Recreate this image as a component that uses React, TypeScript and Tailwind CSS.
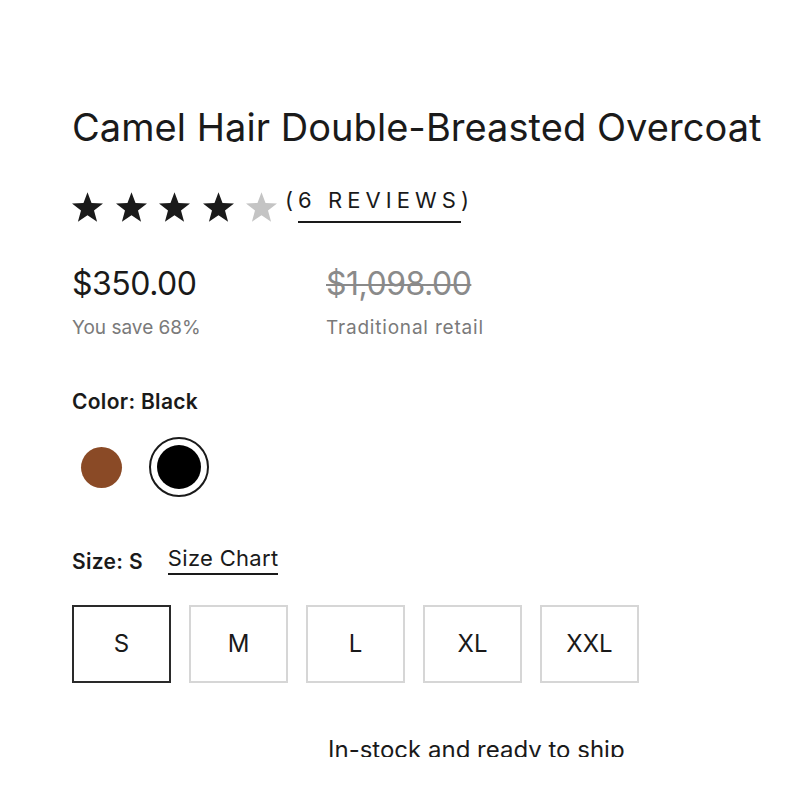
import { useState } from 'react';

const SIZES = ['S', 'M', 'L', 'XL', 'XXL'];

const COLORS = [
  { name: 'Camel', hex: '#8a4a26' },
  { name: 'Black', hex: '#000000' },
];

function Star({ filled }: { filled: boolean }) {
  return (
    <svg viewBox="0 0 24 23" className="w-[31px] h-[30px]" fill={filled ? '#1a1a1a' : '#c4c4c4'}>
      <path d="M12 0L15.12 8.33 24 8.72 17.04 14.26 19.42 22.83 12 17.92 4.58 22.83 6.96 14.26 0 8.72 8.88 8.33Z" />
    </svg>
  );
}

export default function App() {
  const [color, setColor] = useState('Black');
  const [size, setSize] = useState('S');

  return (
    <div className="w-[800px] h-[800px] bg-white overflow-hidden" style={{ fontFamily: 'Inter, "Liberation Sans", sans-serif' }}>
      <div className="h-[757px] overflow-hidden pl-[72px] pt-[104px] text-[#1a1a1a]">
        <h1 className="text-[38px] leading-[46px] tracking-[0.05px] whitespace-nowrap">
          Camel Hair Double-Breasted Overcoat
        </h1>

        {/* Rating */}
        <div className="flex items-center mt-[42px]">
          <div className="flex gap-[12.5px]">
            {[0, 1, 2, 3, 4].map((i) => (
              <Star key={i} filled={i < 4} />
            ))}
          </div>
          <div className="ml-[8px] -mt-[14px] text-[22px] tracking-[0.23em] leading-[28px]">
            (<span className="border-b-2 border-[#1a1a1a] pb-[8px]">6 REVIEWS</span>)
          </div>
        </div>

        {/* Price */}
        <div className="flex mt-[42px]">
          <div className="w-[254px]">
            <div className="text-[32px] leading-[40px] tracking-[-0.5px]">$350.00</div>
            <div className="text-[19px] text-[#7a7a7a] mt-[12px] leading-[24px]">You save 68%</div>
          </div>
          <div>
            <div className="text-[32px] leading-[40px] tracking-[-0.5px] text-[#8a8a8a] line-through decoration-2">$1,098.00</div>
            <div className="text-[19px] text-[#7a7a7a] mt-[12px] leading-[24px] tracking-[0.8px]">Traditional retail</div>
          </div>
        </div>

        {/* Color */}
        <div className="mt-[49px] text-[21px] font-semibold leading-[26px] tracking-[0.3px]">Color: {color}</div>
        <div className="flex items-center gap-[18px] mt-[22px] -ml-[1px]">
          {COLORS.map((c) => {
            const selected = c.name === color;
            return (
              <button
                key={c.name}
                onClick={() => setColor(c.name)}
                className={`w-[60px] h-[60px] rounded-full flex items-center justify-center ${
                  selected ? 'border-2 border-[#1a1a1a]' : 'border-2 border-transparent'
                }`}
              >
                <span
                  className={`block rounded-full ${selected ? 'w-[44px] h-[44px]' : 'w-[41px] h-[41px]'}`}
                  style={{ backgroundColor: c.hex }}
                />
              </button>
            );
          })}
        </div>

        {/* Size */}
        <div className="flex items-end mt-[48px] text-[21px] leading-[26px]">
          <span className="font-semibold tracking-[0.3px]">Size: {size}</span>
          <span className="ml-[25px] text-[22px] tracking-[0.3px] border-b-2 border-[#1a1a1a] pb-[2px]">Size Chart</span>
        </div>
        <div className="flex gap-[18px] mt-[30px]">
          {SIZES.map((s) => (
            <button
              key={s}
              onClick={() => setSize(s)}
              className={`w-[99px] h-[78px] flex items-center justify-center text-[24px] border-2 ${
                s === size ? 'border-[#2a2a2a]' : 'border-[#d6d6d6]'
              }`}
            >
              {s}
            </button>
          ))}
        </div>

        <div className="mt-[52px] pl-[256px] text-[24px] leading-[30px]">In-stock and ready to ship</div>
      </div>
    </div>
  );
}
